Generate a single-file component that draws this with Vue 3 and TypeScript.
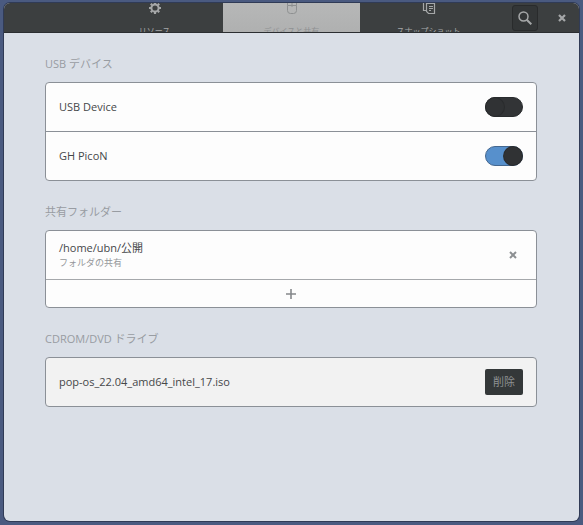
<script setup lang="ts">
import { ref } from 'vue'

interface UsbDevice {
  id: string
  name: string
  enabled: boolean
}

const devices = ref<UsbDevice[]>([
  { id: 'usb-device', name: 'USB Device', enabled: false },
  { id: 'gh-picon', name: 'GH PicoN', enabled: true },
])
const folders = ref<string[]>(['/home/ubn/公開'])
const iso = ref<string>('pop-os_22.04_amd64_intel_17.iso')
</script>

<template>
  <div class="window">
    <header class="bar">
      <nav class="tabs">
        <button type="button" class="tab">
          <svg width="14" height="14" viewBox="0 0 14 14" fill="none" stroke="currentColor">
            <circle cx="7" cy="7" r="3.6" stroke-width="2" />
            <path
              d="M7 1v2M7 11v2M1 7h2M11 7h2M2.8 2.8l1.3 1.3M9.9 9.9l1.3 1.3M11.2 2.8L9.9 4.1M4.1 9.9l-1.3 1.3"
              stroke-width="2.2"
            />
          </svg>
          <span>リソース</span>
        </button>
        <button type="button" class="tab active">
          <svg width="14" height="14" viewBox="0 0 14 14" fill="none" stroke="currentColor">
            <path d="M2.5 4.5h9v5a3 3 0 0 1-3 3h-3a3 3 0 0 1-3-3zM2.5 4.5V1M11.5 4.5V1M7 2v4" />
          </svg>
          <span>デバイスと共有</span>
        </button>
        <button type="button" class="tab">
          <svg width="14" height="14" viewBox="0 0 14 14" fill="none" stroke="currentColor">
            <path d="M4.5 2.5h8v10h-6l-2-2zM7 5.5h4M7 7.5h4M7 9.5h2M1.5 1v8.5h3" stroke-width="1.2" />
          </svg>
          <span>スナップショット</span>
        </button>
      </nav>
      <div class="actions">
        <button type="button" class="search" aria-label="検索">
          <svg width="14" height="14" viewBox="0 0 14 14" fill="none" stroke="currentColor">
            <circle cx="5.5" cy="5.5" r="4.5" stroke-width="1.5" />
            <path d="M8.7 8.7l4.6 4.6" stroke-width="2" />
          </svg>
        </button>
        <button type="button" class="close" aria-label="閉じる">
          <svg width="8" height="8" viewBox="0 0 8 8" stroke="currentColor" stroke-width="2.2">
            <path d="M1 1l6 6M7 1l-6 6" />
          </svg>
        </button>
      </div>
    </header>

    <main class="content">
      <section>
        <h2>USB デバイス</h2>
        <div class="card">
          <div v-for="device in devices" :key="device.id" class="row">
            <label :for="device.id">{{ device.name }}</label>
            <input :id="device.id" v-model="device.enabled" type="checkbox" role="switch" class="switch" />
          </div>
        </div>
      </section>

      <section>
        <h2>共有フォルダー</h2>
        <div class="card">
          <div v-for="folder in folders" :key="folder" class="row">
            <div class="folder">
              <span>{{ folder }}</span>
              <small>フォルダの共有</small>
            </div>
            <button type="button" class="remove" aria-label="共有を解除">
              <svg width="8" height="8" viewBox="0 0 8 8" stroke="currentColor" stroke-width="2">
                <path d="M1 1l6 6M7 1l-6 6" />
              </svg>
            </button>
          </div>
          <button type="button" class="add" aria-label="フォルダーを追加">
            <svg width="10" height="10" viewBox="0 0 10 10" stroke="currentColor" stroke-width="1.6">
              <path d="M5 0v10M0 5h10" />
            </svg>
          </button>
        </div>
      </section>

      <section>
        <h2>CDROM/DVD ドライブ</h2>
        <div class="card muted">
          <div class="row">
            <span>{{ iso }}</span>
            <button type="button" class="delete">削除</button>
          </div>
        </div>
      </section>
    </main>
  </div>
</template>

<style>
body {
  background: #4a5a80;
}
#app {
  display: flex;
  min-height: 100vh;
}
</style>

<style scoped>
.window {
  flex: 1;
  display: flex;
  flex-direction: column;
  margin: 3px 4px 4px;
  overflow: hidden;
  border-radius: 6px;
  background: #dadfe7;
  box-shadow: 0 0 0 1px #303b56;
  color: #454749;
  font-family: 'Open Sans', 'Noto Sans CJK JP', sans-serif;
  font-size: 11px;
  line-height: 16px;
}
button {
  margin: 0;
  padding: 0;
  border: 0;
  background: none;
  color: inherit;
  font: inherit;
}
svg {
  display: block;
}
.bar {
  display: grid;
  grid-template-columns: 1fr minmax(0, 411px) 1fr;
  height: 30px;
  box-sizing: border-box;
  border-bottom: 1px solid #2b2e31;
  background: #3c3f40;
  color: #a5a7a8;
}
.tabs {
  grid-column: 2;
  display: flex;
  overflow: hidden;
}
.tab {
  flex: 1;
  display: flex;
  flex-direction: column;
  align-items: center;
  justify-content: flex-start;
  gap: 10px;
  margin-top: -2px;
  height: 40px;
  font-size: 8px;
  line-height: 12px;
}
.tab.active {
  background: linear-gradient(#b7b8b8, #adaeae);
  color: #8e9091;
}
.tab svg,
.tab span {
  flex: none;
}
.actions {
  grid-column: 3;
  display: flex;
  align-items: center;
  justify-content: flex-end;
  gap: 15px;
  padding-right: 8px;
}
.search {
  display: grid;
  place-items: center;
  width: 26px;
  height: 26px;
  box-sizing: border-box;
  border: 1px solid #292b2c;
  border-radius: 3px;
  background: #333637;
}
.close {
  display: grid;
  place-items: center;
  width: 18px;
  height: 18px;
}
.content {
  display: flex;
  flex-direction: column;
  gap: 23px;
  padding: 23px 42px 23px 41px;
}
h2 {
  margin: 0 0 10px;
  color: #989ca2;
  font-size: 11px;
  font-weight: 400;
  line-height: 16px;
}
.card {
  overflow: hidden;
  border: 1px solid #8b9097;
  border-radius: 4px;
  background: #fdfdfd;
}
.card.muted {
  background: #f2f2f2;
}
.row {
  display: flex;
  align-items: center;
  justify-content: space-between;
  height: 48px;
  padding: 0 13px;
}
.row + .row {
  border-top: 1px solid #8b9097;
}
.folder {
  display: flex;
  flex-direction: column;
}
small {
  color: #94979a;
  font-size: 9px;
  line-height: 14px;
}
.switch {
  appearance: none;
  display: flex;
  width: 38px;
  height: 20px;
  box-sizing: border-box;
  margin: 0;
  border: 1px solid #292c2e;
  border-radius: 10px;
  background: #323436;
}
.switch::before {
  content: '';
  width: 18px;
  height: 18px;
  border-radius: 9px;
  background: #303234;
  box-shadow: 0 0 0 1px #292b2d;
}
.switch:checked {
  justify-content: flex-end;
  border-color: #44678f;
  background: #5790cc;
}
.remove {
  display: grid;
  place-items: center;
  width: 20px;
  height: 20px;
  color: #8c8f92;
}
.add {
  display: grid;
  place-items: center;
  width: 100%;
  height: 28px;
  border-top: 1px solid #a5a8ab;
  color: #85888b;
}
.delete {
  width: 38px;
  height: 26px;
  border-radius: 2px;
  background: #343839;
  color: #8f9293;
}
</style>
